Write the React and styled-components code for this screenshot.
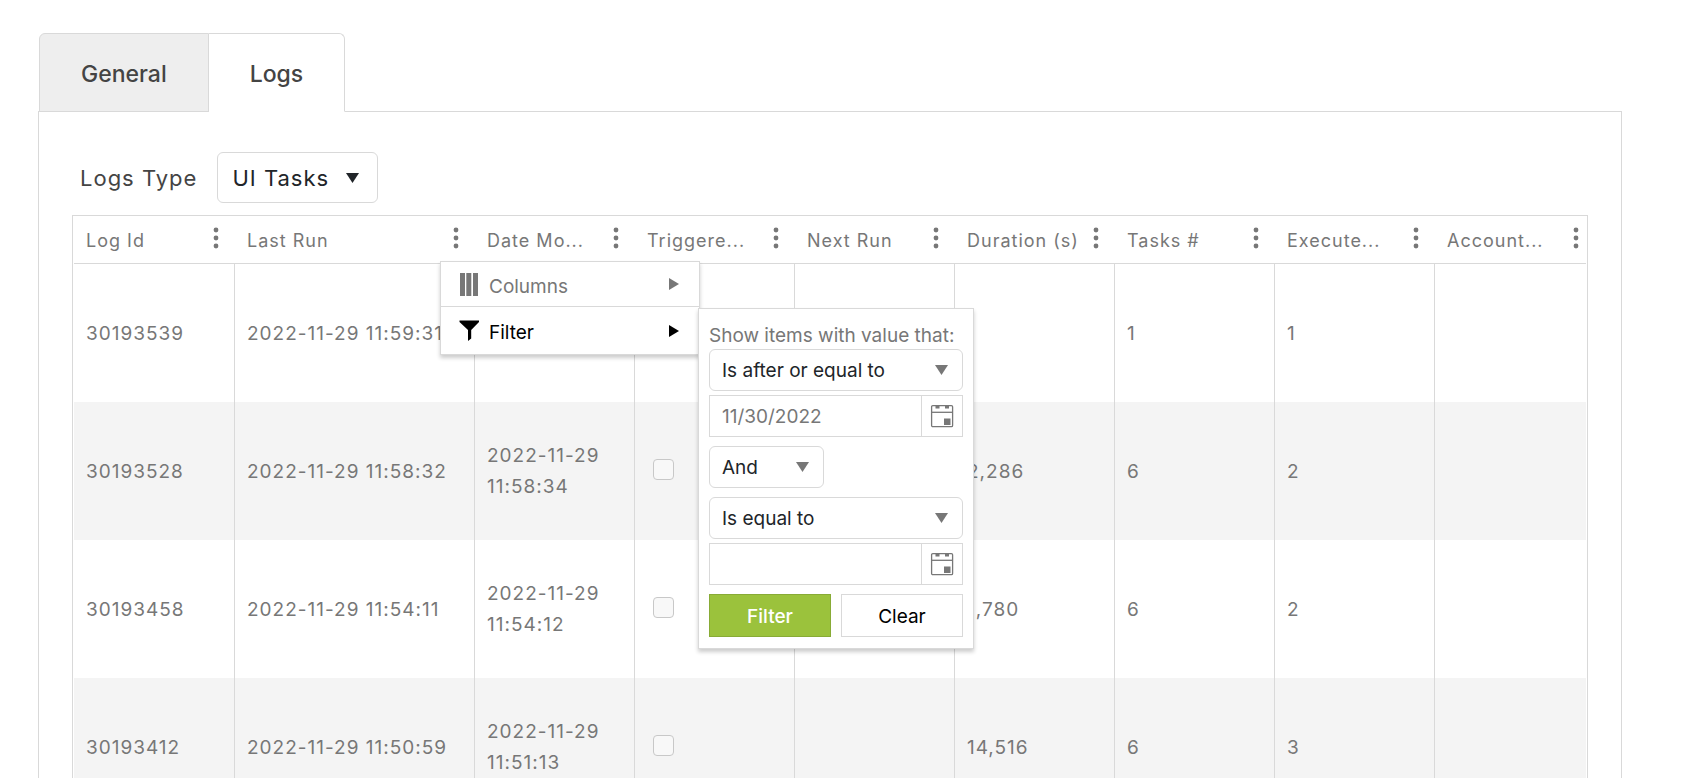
import React from "react";
import styled, { createGlobalStyle } from "styled-components";

const line = "#d9d9d9";
const muted = "#777777";

const GlobalStyle = createGlobalStyle`
  *, *::before, *::after { box-sizing: border-box; }
  body {
    margin: 0;
    background: #ffffff;
    color: ${muted};
    font-family: Inter, "Liberation Sans", sans-serif;
    font-size: 19px;
  }
  button, input, select { font: inherit; color: inherit; letter-spacing: inherit; }
`;

const Page = styled.main`
  height: 100vh;
  overflow: hidden;
  display: flex;
  flex-direction: column;
  padding: 33px 84px 0 38px;
`;

const Tabs = styled.div`
  display: flex;
  padding-left: 1px;
`;

const Tab = styled.button`
  height: 79px;
  padding: 2px 41px 0;
  margin: 0 0 -1px;
  position: relative;
  border: 1px solid ${line};
  border-left-width: ${(p) => (p.$active ? "0" : "1px")};
  border-bottom-color: ${(p) => (p.$active ? "#ffffff" : line)};
  border-radius: ${(p) => (p.$active ? "0 6px 0 0" : "6px 0 0 0")};
  background: ${(p) => (p.$active ? "#ffffff" : "#eeeeee")};
  color: #444444;
  font-size: 23px;
  font-weight: 500;
`;

const Panel = styled.section`
  flex: 1;
  min-height: 0;
  border: 1px solid ${line};
  border-bottom: 0;
  padding: 40px 33px 0;
`;

const Toolbar = styled.div`
  display: flex;
  align-items: center;
  gap: 20px;
  padding-left: 8px;
  margin-bottom: 12px;
  color: #444444;
  font-size: 22px;
  letter-spacing: 1px;
`;

const SelectBox = styled.span`
  display: grid;
  align-items: center;
  width: ${(p) => p.$width};
  color: ${(p) => (p.$large ? "#212529" : muted)};
  letter-spacing: ${(p) => (p.$large ? "1px" : "normal")};
  > * { grid-area: 1 / 1; }
  > svg {
    justify-self: end;
    margin-right: ${(p) => (p.$large ? "19px" : "15px")};
    pointer-events: none;
  }
`;

const Select = styled.select`
  appearance: none;
  width: 100%;
  height: ${(p) => (p.$large ? "51px" : "42px")};
  padding: 0 12px 0 ${(p) => (p.$large ? "14px" : "12px")};
  border: 1px solid ${line};
  border-radius: 6px;
  background: #ffffff;
  color: #212529;
`;

const Grid = styled.div`
  border: 1px solid ${line};
  padding: 0 1px;
`;

const GridClip = styled.div`
  overflow: hidden;
`;

const Table = styled.table`
  table-layout: fixed;
  width: 100%;
  min-width: 1521px;
  border-collapse: separate;
  border-spacing: 0;
  letter-spacing: 1px;
`;

const Th = styled.th`
  position: relative;
  height: 48px;
  padding: 0 11px 0 12px;
  border-bottom: 1px solid ${line};
  font-weight: 400;
  text-align: left;
`;

const HeadRow = styled.div`
  display: flex;
  align-items: center;
  justify-content: space-between;
`;

const HeadText = styled.span`
  white-space: nowrap;
  font-size: 18px;
  line-height: 30px;
  padding-top: 2px;
`;

const MenuButton = styled.button`
  display: flex;
  justify-content: center;
  width: 16px;
  height: 32px;
  padding: 3px 0 0;
  border: 0;
  background: none;
`;

const Row = styled.tr`
  height: 138px;
  background: ${(p) => (p.$shade ? "#f4f4f4" : "#ffffff")};
`;

const Td = styled.td`
  padding: 0 12px;
  border-right: 1px solid ${line};
  line-height: 31px;
  &:last-child { border-right: 0; }
`;

const Check = styled.input`
  appearance: none;
  display: block;
  width: 21px;
  height: 21px;
  margin: 0 6px 4px;
  border: 1px solid #c8c8c8;
  border-radius: 4px;
  background: #f8f8f8;
`;

const Menu = styled.div`
  position: absolute;
  z-index: 2;
  top: calc(100% - 2px);
  left: calc(100% - 35px);
  width: 260px;
  border: 1px solid ${line};
  background: #ffffff;
  box-shadow: 0 3px 4px rgba(0, 0, 0, 0.2);
  letter-spacing: normal;
`;

const MenuEntry = styled.div`
  position: relative;
  & + & { border-top: 1px solid ${line}; }
`;

const MenuItem = styled.button`
  display: flex;
  align-items: center;
  width: 100%;
  height: ${(p) => (p.$active ? "47px" : "44px")};
  padding: 0 20px 0 18px;
  gap: 10px;
  border: 0;
  background: none;
  color: ${(p) => (p.$active ? "#000000" : muted)};
  text-align: left;
  span { flex: 1; padding-top: 4px; }
`;

const Popup = styled.form`
  position: absolute;
  top: 1px;
  left: calc(100% - 1px);
  width: 276px;
  padding: 14px 10px 11px;
  border: 1px solid ${line};
  background: #ffffff;
  box-shadow: 0 3px 4px rgba(0, 0, 0, 0.2);
`;

const Fields = styled.div`
  display: flex;
  flex-direction: column;
  gap: 4px;
  margin-bottom: 9px;
`;

const Caption = styled.div`
  height: 26px;
  line-height: 25px;
  white-space: nowrap;
`;

const DateBox = styled.div`
  display: flex;
  height: 42px;
  border: 1px solid ${line};
`;

const DateInput = styled.input`
  flex: 1;
  min-width: 0;
  padding: 0 12px;
  border: 0;
  background: none;
`;

const DateButton = styled.button`
  display: grid;
  place-items: center;
  width: 41px;
  padding: 0;
  border: 0;
  border-left: 1px solid ${line};
  background: none;
`;

const Actions = styled.div`
  display: grid;
  grid-template-columns: 1fr 1fr;
  gap: 10px;
`;

const Action = styled.button`
  height: 43px;
  padding: 2px 0 0;
  border: 1px solid ${(p) => (p.$primary ? "#88ab36" : line)};
  background: ${(p) => (p.$primary ? "#9bc23c" : "#ffffff")};
  color: ${(p) => (p.$primary ? "#ffffff" : "#000000")};
  font-weight: ${(p) => (p.$primary ? 500 : 400)};
`;

const Down = () => (
  <svg width="13" height="10" viewBox="0 0 13 10" fill="currentColor" aria-hidden="true">
    <path d="M0 0h13L6.5 10z" />
  </svg>
);

const Right = () => (
  <svg width="10" height="12" viewBox="0 0 10 12" fill="currentColor" aria-hidden="true">
    <path d="M0 0l10 6-10 6z" />
  </svg>
);

const Dots = () => (
  <svg width="6" height="22" viewBox="0 0 6 22" fill="currentColor" aria-hidden="true">
    <circle cx="3" cy="3" r="2.4" />
    <circle cx="3" cy="11" r="2.4" />
    <circle cx="3" cy="19" r="2.4" />
  </svg>
);

const ColumnsIcon = () => (
  <svg width="20" height="23" viewBox="0 0 20 23" fill="currentColor" aria-hidden="true">
    <path d="M1 0h5v23H1zM7.3 0h5v23h-5zM14 0h5v23h-5z" />
  </svg>
);

const FunnelIcon = () => (
  <svg width="20" height="21" viewBox="0 0 20 21" fill="currentColor" aria-hidden="true">
    <path d="M0.5 0.5h19.5v1.5L12.2 10v8.5L9 21V10L0.5 2z" />
  </svg>
);

const CalendarIcon = () => (
  <svg width="24" height="24" viewBox="0 0 24 24" aria-hidden="true">
    <rect x="1.6" y="1.6" width="21" height="21" rx="1.2" fill="none" stroke="currentColor" strokeWidth="1.3" />
    <path d="M1.6 8.3h21" stroke="currentColor" strokeWidth="1.3" />
    <path d="M5.5 1h4v3.4h-4zM15 1h4v3.4h-4zM14 14.5h6.5V21H14z" fill="currentColor" />
  </svg>
);

const columns = [
  "Log Id",
  "Last Run",
  "Date Mo...",
  "Triggere...",
  "Next Run",
  "Duration (s)",
  "Tasks #",
  "Execute...",
  "Account...",
];

const rows = [
  ["30193539", "2022-11-29 11:59:31", "2022-11-29 11:59:32", "", "1", "1"],
  ["30193528", "2022-11-29 11:58:32", "2022-11-29 11:58:34", "2,286", "6", "2"],
  ["30193458", "2022-11-29 11:54:11", "2022-11-29 11:54:12", "1,780", "6", "2"],
  ["30193412", "2022-11-29 11:50:59", "2022-11-29 11:51:13", "14,516", "6", "3"],
];

function Dropdown({ width, large, value, options, ...rest }) {
  return (
    <SelectBox $width={width} $large={large}>
      <Select $large={large} defaultValue={value} {...rest}>
        {options.map((o) => (
          <option key={o}>{o}</option>
        ))}
      </Select>
      <Down />
    </SelectBox>
  );
}

function DateField({ value, label }) {
  return (
    <DateBox>
      <DateInput type="text" aria-label={label} defaultValue={value} />
      <DateButton type="button" aria-label={`Pick ${label}`}>
        <CalendarIcon />
      </DateButton>
    </DateBox>
  );
}

function FilterPopup() {
  const operators = ["Is equal to", "Is after or equal to", "Is after", "Is before"];
  return (
    <Popup onSubmit={(e) => e.preventDefault()}>
      <Caption>Show items with value that:</Caption>
      <Fields>
        <Dropdown width="100%" value="Is after or equal to" options={operators} aria-label="First operator" />
        <DateField value="11/30/2022" label="first date" />
      </Fields>
      <Fields>
        <Dropdown width="115px" value="And" options={["And", "Or"]} aria-label="Logic" />
      </Fields>
      <Fields>
        <Dropdown width="100%" value="Is equal to" options={operators} aria-label="Second operator" />
        <DateField value="" label="second date" />
      </Fields>
      <Actions>
        <Action $primary type="submit">Filter</Action>
        <Action type="reset">Clear</Action>
      </Actions>
    </Popup>
  );
}

function ColumnMenu() {
  return (
    <Menu>
      <MenuEntry>
        <MenuItem type="button">
          <ColumnsIcon />
          <span>Columns</span>
          <Right />
        </MenuItem>
      </MenuEntry>
      <MenuEntry>
        <MenuItem type="button" $active>
          <FunnelIcon />
          <span>Filter</span>
          <Right />
        </MenuItem>
        <FilterPopup />
      </MenuEntry>
    </Menu>
  );
}

export default function App() {
  return (
    <Page>
      <GlobalStyle />
      <Tabs role="tablist">
        <Tab type="button" role="tab" aria-selected="false">General</Tab>
        <Tab type="button" role="tab" aria-selected="true" $active>Logs</Tab>
      </Tabs>
      <Panel>
        <Toolbar>
          <label htmlFor="logs-type">Logs Type</label>
          <Dropdown id="logs-type" width="161px" large value="UI Tasks" options={["UI Tasks", "API Tasks"]} />
        </Toolbar>
        <Grid>
          <GridClip>
            <Table>
              <colgroup>
                {columns.map((c, i) => (
                  <col key={c} width={i === 1 ? 240 : i === 0 ? 161 : 160} />
                ))}
              </colgroup>
              <thead>
                <tr>
                  {columns.map((c) => (
                    <Th key={c} scope="col">
                      <HeadRow>
                        <HeadText>{c}</HeadText>
                        <MenuButton type="button" aria-label={`${c} menu`}>
                          <Dots />
                        </MenuButton>
                      </HeadRow>
                      {c === "Last Run" && <ColumnMenu />}
                    </Th>
                  ))}
                </tr>
              </thead>
              <tbody>
                {rows.map(([id, run, modified, duration, tasks, executed], i) => (
                  <Row key={id} $shade={i % 2 === 1}>
                    <Td>{id}</Td>
                    <Td>{run}</Td>
                    <Td>{modified}</Td>
                    <Td>
                      <Check type="checkbox" aria-label={`Triggered ${id}`} />
                    </Td>
                    <Td />
                    <Td>{duration}</Td>
                    <Td>{tasks}</Td>
                    <Td>{executed}</Td>
                    <Td />
                  </Row>
                ))}
              </tbody>
            </Table>
          </GridClip>
        </Grid>
      </Panel>
    </Page>
  );
}
